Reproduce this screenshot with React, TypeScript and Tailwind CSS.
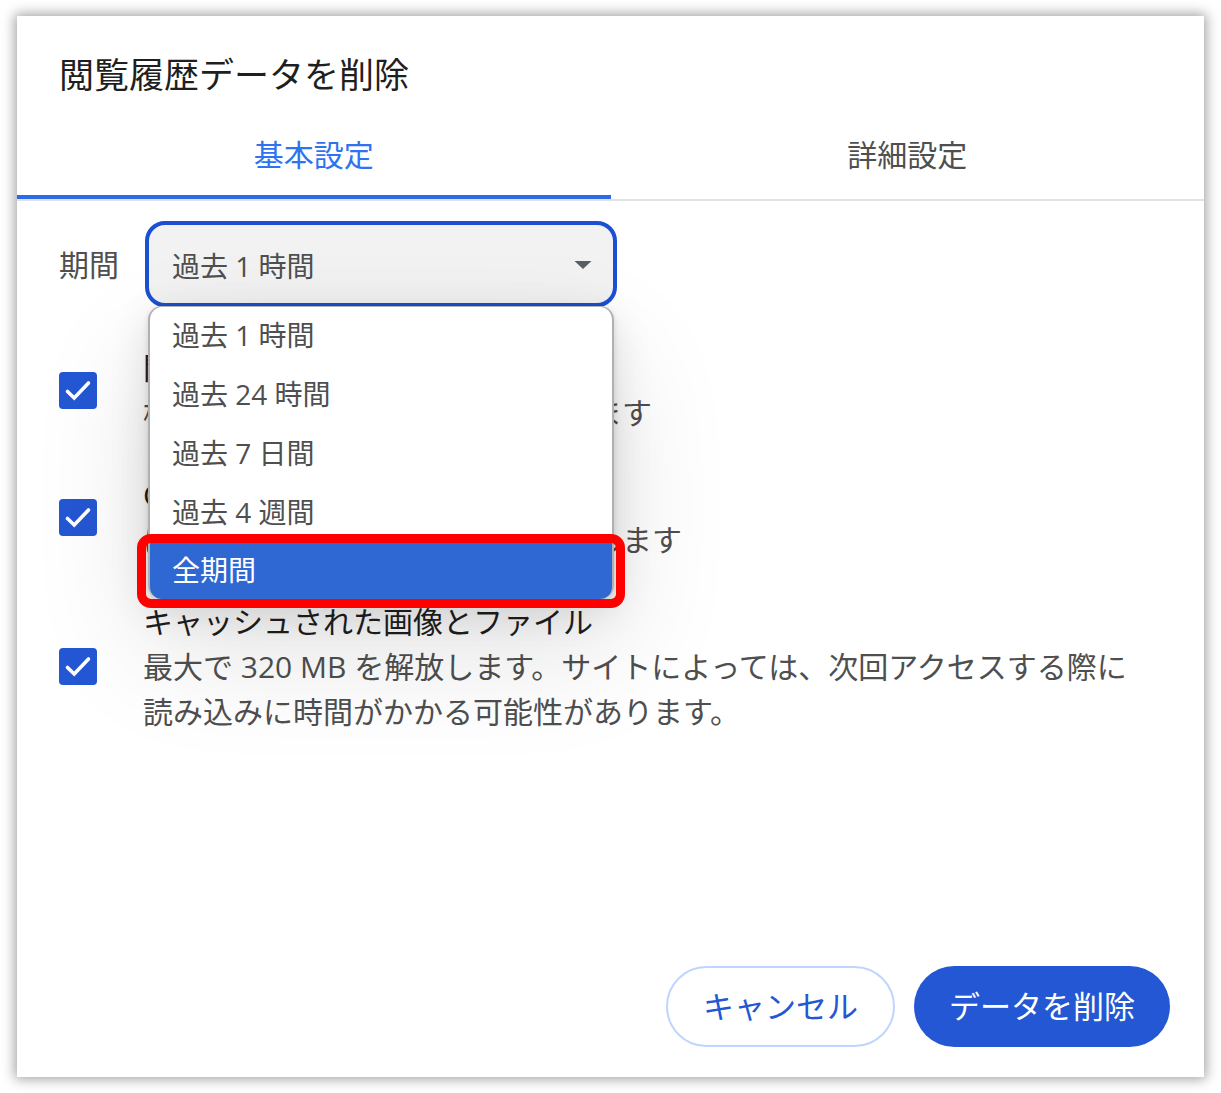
import { useState } from 'react';

const PERIODS = ['過去 1 時間', '過去 24 時間', '過去 7 日間', '過去 4 週間', '全期間'];

const ITEMS = [
  {
    id: 'history',
    title: '閲覧履歴',
    description: '検索ボックスなどの履歴を削除します',
  },
  {
    id: 'cookies',
    title: 'Cookie と他のサイトデータ',
    description: 'ほとんどのサイトからログアウトします',
  },
  {
    id: 'cache',
    title: 'キャッシュされた画像とファイル',
    description:
      '最大で 320 MB を解放します。サイトによっては、次回アクセスする際に読み込みに時間がかかる可能性があります。',
  },
];

function Tabs() {
  return (
    <div role="tablist" className="mt-4 flex border-b-2 border-[#e1e2e6] text-[30px] leading-10">
      <button
        type="button"
        role="tab"
        aria-selected="true"
        className="h-[84px] flex-1 rounded-tr-sm border-b-4 border-[#2a6be8] text-[#2f73f0]"
      >
        基本設定
      </button>
      <button
        type="button"
        role="tab"
        aria-selected="false"
        className="h-[84px] flex-1 border-b-4 border-transparent text-[#4f4f4f]"
      >
        詳細設定
      </button>
    </div>
  );
}

function PeriodSelect() {
  const [period, setPeriod] = useState(PERIODS[0]);

  return (
    <div className="flex items-center gap-[26px] px-[42px] pt-5">
      <label htmlFor="period" className="shrink-0 text-[30px] text-[#4f4f4f]">
        期間
      </label>
      <div className="relative w-[472px]">
        <select
          id="period"
          value={period}
          onChange={(e) => setPeriod(e.target.value)}
          className="h-[86px] w-full appearance-none rounded-[20px] border-4 border-[#1b50d3] bg-[#f2f2f2] px-[23px] pt-1 text-[28px] text-[#4f4f4f] outline-none"
        >
          {PERIODS.map((p) => (
            <option key={p}>{p}</option>
          ))}
        </select>
        <svg
          viewBox="0 0 18 8"
          className="pointer-events-none absolute top-10 right-[25px] h-2 w-[18px] fill-[#5a5f64]"
        >
          <path d="M0.5 0h17L9 8z" />
        </svg>

        <div
          role="listbox"
          aria-label="期間"
          className="absolute top-full right-[3px] left-[3px] z-10 -mt-px rounded-[14px] border-x-2 border-t border-[#b0b0b0] bg-white text-[28px] text-[#4f4f4f] shadow-[0_50px_120px_rgba(0,0,0,0.12),0_12px_40px_rgba(0,0,0,0.12),0_2px_6px_rgba(0,0,0,0.12)]"
        >
          {PERIODS.map((p) => {
            const active = p === '全期間';
            return (
              <button
                key={p}
                type="button"
                role="option"
                aria-selected={active}
                onClick={() => setPeriod(p)}
                className={
                  active
                    ? 'relative block h-14 w-full rounded-b-xl bg-[#2f67d3] px-[22px] pb-[3px] text-left text-white'
                    : 'block h-[59px] w-full px-[22px] pb-[3px] text-left'
                }
              >
                {p}
                {active && (
                  <span className="absolute -inset-x-[13px] -inset-y-[9px] rounded-[14px] border-9 border-[#ff0000]" />
                )}
              </button>
            );
          })}
        </div>
      </div>
    </div>
  );
}

function CheckRow({ id, title, description }: { id: string; title: string; description: string }) {
  return (
    <div className="flex items-center gap-[46px]">
      <span className="relative h-[37px] w-[38px] shrink-0">
        <input
          id={id}
          type="checkbox"
          defaultChecked
          className="peer block size-full appearance-none rounded-[4px] border-2 border-[#5f6368] checked:border-0 checked:bg-[#2457d3]"
        />
        <svg
          viewBox="0 0 38 37"
          className="pointer-events-none absolute inset-0 hidden size-full peer-checked:block"
        >
          <path
            d="M8.5 19.5 15.2 26 29.5 11"
            fill="none"
            stroke="#fff"
            strokeWidth="3.6"
            strokeLinecap="round"
          />
        </svg>
      </span>
      <label htmlFor={id} className="text-[30px] leading-[45px] text-[#4f4f4f]">
        <span className="block text-[#1f1f1f]">{title}</span>
        {description}
      </label>
    </div>
  );
}

export default function App() {
  return (
    <div className="flex min-h-screen flex-col bg-white px-[17px] py-4 font-['Open_Sans','Noto_Sans_CJK_JP',sans-serif]">
      <main className="flex flex-1 flex-col bg-white pt-[35px] shadow-[0_0_12px_2px_rgba(0,0,0,0.38)]">
        <h1 className="px-[42px] text-[35px] leading-[48px] text-[#1f1f1f]">
          閲覧履歴データを削除
        </h1>
        <Tabs />
        <PeriodSelect />

        <div className="mt-[38px] flex flex-col gap-[37px] pr-[60px] pl-[42px]">
          {ITEMS.map((item) => (
            <CheckRow key={item.id} {...item} />
          ))}
        </div>

        <div className="mt-auto flex justify-end gap-[19px] px-[34px] pt-8 pb-[30px] text-[31px]">
          <button
            type="button"
            className="h-[81px] rounded-full border-2 border-[#bfd5ff] px-[35px] text-[#2457d3]"
          >
            キャンセル
          </button>
          <button type="button" className="h-[81px] rounded-full bg-[#2457d3] px-[35px] text-white">
            データを削除
          </button>
        </div>
      </main>
    </div>
  );
}
